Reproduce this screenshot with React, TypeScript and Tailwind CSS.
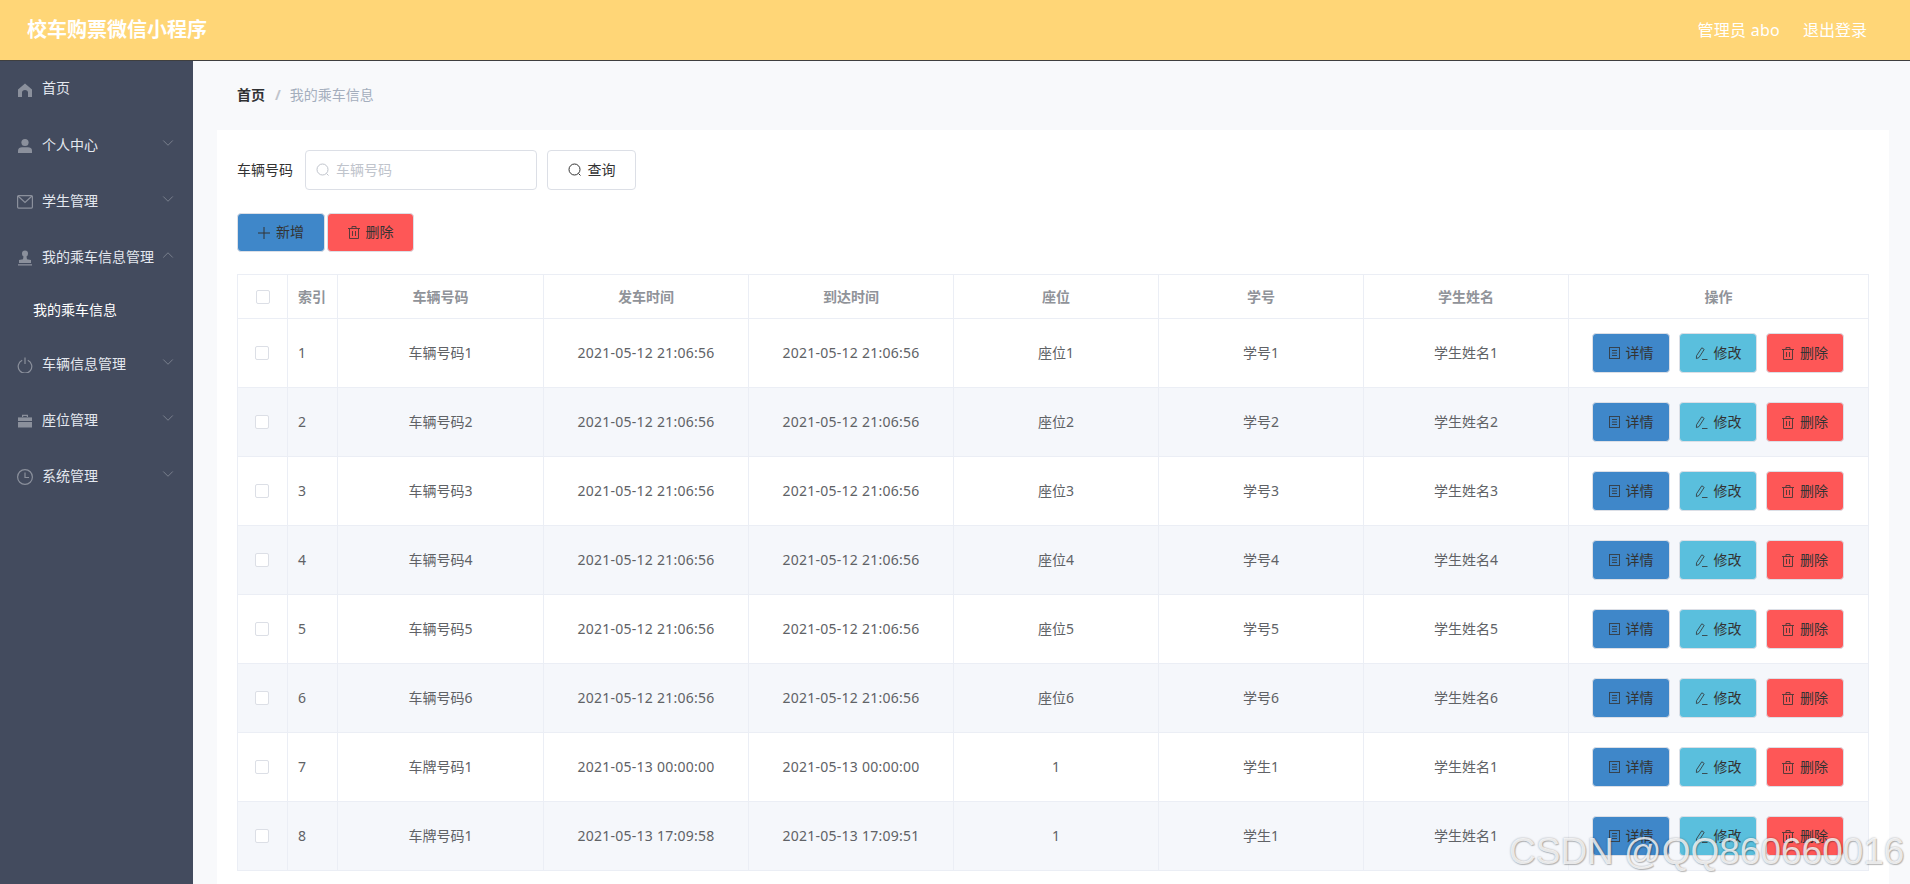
import type { ReactNode } from 'react';
import { ChevronDown, ChevronUp } from 'lucide-react';

const HomeIcon = () => (
    <svg width="16" height="16" viewBox="0 0 16 16" fill="currentColor">
        <path d="M8 1.5 15 7.5V15H11V10.5C11 9 9.8 8 8 8S5 9 5 10.5V15H1V7.5Z" />
    </svg>
);

const UserIcon = () => (
    <svg width="16" height="16" viewBox="0 0 16 16" fill="currentColor">
        <circle cx="8" cy="4.5" r="3.6" />
        <path d="M1 15V12.5C1 10.2 3 9.3 5 9.3H11C13 9.3 15 10.2 15 12.5V15Z" />
    </svg>
);

const MailIcon = () => (
    <svg width="16" height="14" viewBox="0 0 16 14" fill="none" stroke="currentColor" strokeWidth="1.2">
        <rect x="0.6" y="0.6" width="14.8" height="12.5" rx="1" />
        <path d="M1 1 8 7.5 15 1" />
    </svg>
);

const StampIcon = () => (
    <svg width="16" height="16" viewBox="0 0 16 16" fill="currentColor">
        <circle cx="8" cy="3.6" r="3" />
        <path d="M6.6 6h2.8l.6 3.2 4 .9V13H2v-2.9l4-.9Z" />
        <rect x="1" y="14.2" width="14" height="1.3" />
    </svg>
);

const PowerIcon = () => (
    <svg width="16" height="16" viewBox="0 0 16 16" fill="none" stroke="currentColor" strokeWidth="1.2">
        <path d="M5.2 3.2a6.8 6.8 0 1 0 5.6 0" />
        <path d="M8 0.5V7" />
    </svg>
);

const CaseIcon = () => (
    <svg width="16" height="14" viewBox="0 0 16 14" fill="currentColor">
        <path d="M5 3V.8h6V3h-1.2V2H6.2v1Z" />
        <path d="M1 3.4h14V7H1Z" />
        <path d="M1 8h14v5.5H1Z" />
    </svg>
);

const ClockIcon = () => (
    <svg width="16" height="16" viewBox="0 0 16 16" fill="none" stroke="currentColor" strokeWidth="1.2">
        <circle cx="8" cy="8" r="7.4" />
        <path d="M8 3.5V8.5H12" />
    </svg>
);

const SearchIcon = () => (
    <svg width="14" height="14" viewBox="0 0 14 14" fill="none" stroke="currentColor" strokeWidth="1">
        <circle cx="6.5" cy="6.5" r="5.5" />
        <path d="M10.5 10.5 12.5 12.5" />
    </svg>
);

const PlusIcon = () => (
    <svg width="12" height="12" viewBox="0 0 12 12" fill="none" stroke="currentColor" strokeWidth="1">
        <path d="M6 0V12M0 6H12" />
    </svg>
);

const TrashIcon = () => (
    <svg width="12" height="13" viewBox="0 0 12 13" fill="none" stroke="currentColor" strokeWidth="1" opacity="0.8">
        <path d="M0 2.5H12M4 2.5V.5H8V2.5" />
        <path d="M1.5 2.5V12.5H10.5V2.5" />
        <path d="M4.5 5V10M7.5 5V10" />
    </svg>
);

const TicketIcon = () => (
    <svg width="11" height="12" viewBox="0 0 11 12" fill="none" stroke="currentColor" strokeWidth="1" opacity="0.8">
        <rect x="0.5" y="0.5" width="10" height="11" />
        <path d="M3 3.5H8M3 6H8M3 8.5H8" />
    </svg>
);

const EditIcon = () => (
    <svg width="13" height="13" viewBox="0 0 13 13" fill="none" stroke="currentColor" strokeWidth="1" opacity="0.8">
        <path d="M6.8.8 9.2 2.4 4 10.5 1.4 11.6 1.5 8.8Z" />
        <path d="M7 12.5H12.5" />
    </svg>
);

const menus: { icon: ReactNode; label: string; arrow?: 'down' | 'up' }[] = [
    { icon: <HomeIcon />, label: '首页' },
    { icon: <UserIcon />, label: '个人中心', arrow: 'down' },
    { icon: <MailIcon />, label: '学生管理', arrow: 'down' },
    { icon: <StampIcon />, label: '我的乘车信息管理', arrow: 'up' },
];

const menusBottom: { icon: ReactNode; label: string; arrow?: 'down' | 'up' }[] = [
    { icon: <PowerIcon />, label: '车辆信息管理', arrow: 'down' },
    { icon: <CaseIcon />, label: '座位管理', arrow: 'down' },
    { icon: <ClockIcon />, label: '系统管理', arrow: 'down' },
];

const rows = [
    { id: 1, car: '车辆号码1', start: '2021-05-12 21:06:56', end: '2021-05-12 21:06:56', seat: '座位1', no: '学号1', name: '学生姓名1' },
    { id: 2, car: '车辆号码2', start: '2021-05-12 21:06:56', end: '2021-05-12 21:06:56', seat: '座位2', no: '学号2', name: '学生姓名2' },
    { id: 3, car: '车辆号码3', start: '2021-05-12 21:06:56', end: '2021-05-12 21:06:56', seat: '座位3', no: '学号3', name: '学生姓名3' },
    { id: 4, car: '车辆号码4', start: '2021-05-12 21:06:56', end: '2021-05-12 21:06:56', seat: '座位4', no: '学号4', name: '学生姓名4' },
    { id: 5, car: '车辆号码5', start: '2021-05-12 21:06:56', end: '2021-05-12 21:06:56', seat: '座位5', no: '学号5', name: '学生姓名5' },
    { id: 6, car: '车辆号码6', start: '2021-05-12 21:06:56', end: '2021-05-12 21:06:56', seat: '座位6', no: '学号6', name: '学生姓名6' },
    { id: 7, car: '车牌号码1', start: '2021-05-13 00:00:00', end: '2021-05-13 00:00:00', seat: '1', no: '学生1', name: '学生姓名1' },
    { id: 8, car: '车牌号码1', start: '2021-05-13 17:09:58', end: '2021-05-13 17:09:51', seat: '1', no: '学生1', name: '学生姓名1' },
];

const MenuItem = ({ icon, label, arrow, first }: { icon: ReactNode; label: string; arrow?: 'down' | 'up'; first?: boolean }) => (
    <div className={`flex items-center text-[14px] text-[#e4e8ef] ${first ? 'h-[57px]' : 'h-[56px]'}`}>
        <span className="flex w-[42px] justify-center pl-[8px] text-[#8b909c]">{icon}</span>
        <span className="whitespace-nowrap pb-[4px]">{label}</span>
        {arrow === 'down' && <ChevronDown size={18} strokeWidth={1} className="ml-auto mr-[16px] -mt-[6px] text-[#8b909c]" />}
        {arrow === 'up' && <ChevronUp size={18} strokeWidth={1} className="ml-auto mr-[16px] -mt-[6px] text-[#8b909c]" />}
    </div>
);

const Check = ({ className }: { className: string }) => (
    <span className={`block h-[14px] w-[14px] rounded-[2px] border border-[#dcdfe6] bg-white ${className}`} />
);

const RowBtn = ({ color, icon, text }: { color: string; icon: ReactNode; text: string }) => (
    <button className={`flex h-[40px] w-[78px] items-center justify-center gap-[6px] rounded-[4px] border border-[#dcdfe6] text-[14px] text-[#333] ${color}`}>
        {icon}
        <span className="pb-[2px]">{text}</span>
    </button>
);

const App = () => {
    const head = 'border border-[#ebeef5] text-center text-[14px] font-bold';
    const cell = 'border border-[#ebeef5] pb-[2px] text-center text-[14px] font-normal';
    const time = 'border border-[#ebeef5] pb-[2px] text-center text-[14px] font-normal tracking-[0.26px]';

    return (
        <div className="flex h-screen flex-col overflow-hidden bg-[#f8f9fb] font-['Noto_Sans','Noto_Sans_CJK_SC',sans-serif] text-[#606266]">
            <header className="flex h-[61px] shrink-0 items-center border-b border-[#3f3f3f] bg-[#ffd677] pl-[27px] pr-[43px] text-white">
                <h1 className="text-[20px] font-bold">校车购票微信小程序</h1>
                <span className="ml-auto text-[16px] tracking-[0.25px]">管理员 abo</span>
                <span className="ml-[23px] text-[16px]">退出登录</span>
            </header>

            <div className="flex min-h-0 flex-1">
                <aside className="w-[193px] shrink-0 bg-[#434b5e]">
                    {menus.map((m, i) => (
                        <MenuItem key={m.label} {...m} first={i === 0} />
                    ))}
                    <div className="flex h-[51px] items-center pb-[5px] pl-[33px] text-[14px] text-white">我的乘车信息</div>
                    {menusBottom.map((m) => (
                        <MenuItem key={m.label} {...m} />
                    ))}
                </aside>

                <main className="min-w-0 flex-1 pl-[24px] pr-[21px]">
                    <nav className="flex h-[69px] items-center pb-[2px] pl-[20px] text-[14px]">
                        <span className="font-bold text-[#303133]">首页</span>
                        <span className="ml-[10px] mr-[9px] font-bold text-[#c0c4cc]">/</span>
                        <span className="text-[#a4aebd]">我的乘车信息</span>
                    </nav>

                    <section className="bg-white px-[20px] pt-[20px]">
                        <div className="flex h-[40px] items-center">
                            <label className="mr-[12px] pb-[2px] text-[14px] text-[#333]">车辆号码</label>
                            <div className="flex h-[40px] w-[232px] items-center gap-[6px] rounded-[4px] border border-[#dcdfe6] px-[10px] text-[14px] text-[#c0c4cc]">
                                <SearchIcon />
                                <span className="pb-[2px]">车辆号码</span>
                            </div>
                            <button className="ml-[10px] flex h-[40px] w-[89px] items-center justify-center gap-[6px] rounded-[4px] border border-[#dcdfe6] text-[14px] text-[#333]">
                                <SearchIcon />
                                <span className="pb-[2px]">查询</span>
                            </button>
                        </div>

                        <div className="mt-[23px] flex h-[39px] gap-[2px]">
                            <button className="flex w-[88px] items-center justify-center gap-[6px] rounded-[4px] border border-[#dcdfe6] bg-[#3f87c9] text-[14px] text-[#333]">
                                <PlusIcon />
                                <span className="pb-[2px]">新增</span>
                            </button>
                            <button className="flex w-[87px] items-center justify-center gap-[6px] rounded-[4px] border border-[#dcdfe6] bg-[#fe5757] text-[14px] text-[#333]">
                                <TrashIcon />
                                <span className="pb-[2px]">删除</span>
                            </button>
                        </div>

                        <table className="mt-[22px] w-full table-fixed border-collapse">
                            <colgroup>
                                <col className="w-[50px]" />
                                <col className="w-[50px]" />
                                <col className="w-[206px]" />
                                <col className="w-[205px]" />
                                <col className="w-[205px]" />
                                <col className="w-[205px]" />
                                <col className="w-[205px]" />
                                <col className="w-[205px]" />
                                <col />
                            </colgroup>
                            <thead>
                                <tr className="h-[44px] text-[#909399]">
                                    <th className={head}>
                                        <Check className="mx-auto" />
                                    </th>
                                    <th className={`${head} pl-[10px] text-left`}>索引</th>
                                    <th className={head}>车辆号码</th>
                                    <th className={head}>发车时间</th>
                                    <th className={head}>到达时间</th>
                                    <th className={head}>座位</th>
                                    <th className={head}>学号</th>
                                    <th className={head}>学生姓名</th>
                                    <th className={head}>操作</th>
                                </tr>
                            </thead>
                            <tbody>
                                {rows.map((r) => (
                                    <tr key={r.id} className={`h-[69px] ${r.id % 2 === 0 ? 'bg-[#f5f7fb]' : 'bg-white'}`}>
                                        <td className="border border-[#ebeef5]">
                                            <Check className="ml-[17px]" />
                                        </td>
                                        <td className={`${cell} pl-[10px] text-left`}>{r.id}</td>
                                        <td className={cell}>{r.car}</td>
                                        <td className={time}>{r.start}</td>
                                        <td className={time}>{r.end}</td>
                                        <td className={cell}>{r.seat}</td>
                                        <td className={cell}>{r.no}</td>
                                        <td className={cell}>{r.name}</td>
                                        <td className="border border-[#ebeef5]">
                                            <div className="flex justify-center gap-[9px] pr-[1px]">
                                                <RowBtn color="bg-[#3f87c9]" icon={<TicketIcon />} text="详情" />
                                                <RowBtn color="bg-[#5abfdd]" icon={<EditIcon />} text="修改" />
                                                <RowBtn color="bg-[#fe5757]" icon={<TrashIcon />} text="删除" />
                                            </div>
                                        </td>
                                    </tr>
                                ))}
                            </tbody>
                        </table>

                        <div className="mt-[13px] flex pl-[181px] text-[13px] font-bold">
                            <span className="h-[28px] w-[29px] rounded-[2px] bg-[#f4f4f5]" />
                            <span className="ml-[11px] flex h-[28px] w-[29px] items-center justify-center rounded-[2px] bg-[#1abc93] text-white">1</span>
                            <span className="ml-[11px] h-[28px] w-[29px] rounded-[2px] bg-[#f4f4f5]" />
                            <span className="ml-[61px] h-[28px] w-[43px] rounded-[3px] border border-[#dcdfe6] bg-white" />
                        </div>
                    </section>
                </main>
            </div>

            <span className="absolute left-[1509px] top-[824px] whitespace-nowrap font-['Liberation_Sans',sans-serif] text-[37px] text-white/80 [text-shadow:0_0_2px_rgba(0,0,0,0.35),1px_1px_1px_rgba(0,0,0,0.2)]">
                CSDN @QQ860660016
            </span>
        </div>
    );
};

export default App;
